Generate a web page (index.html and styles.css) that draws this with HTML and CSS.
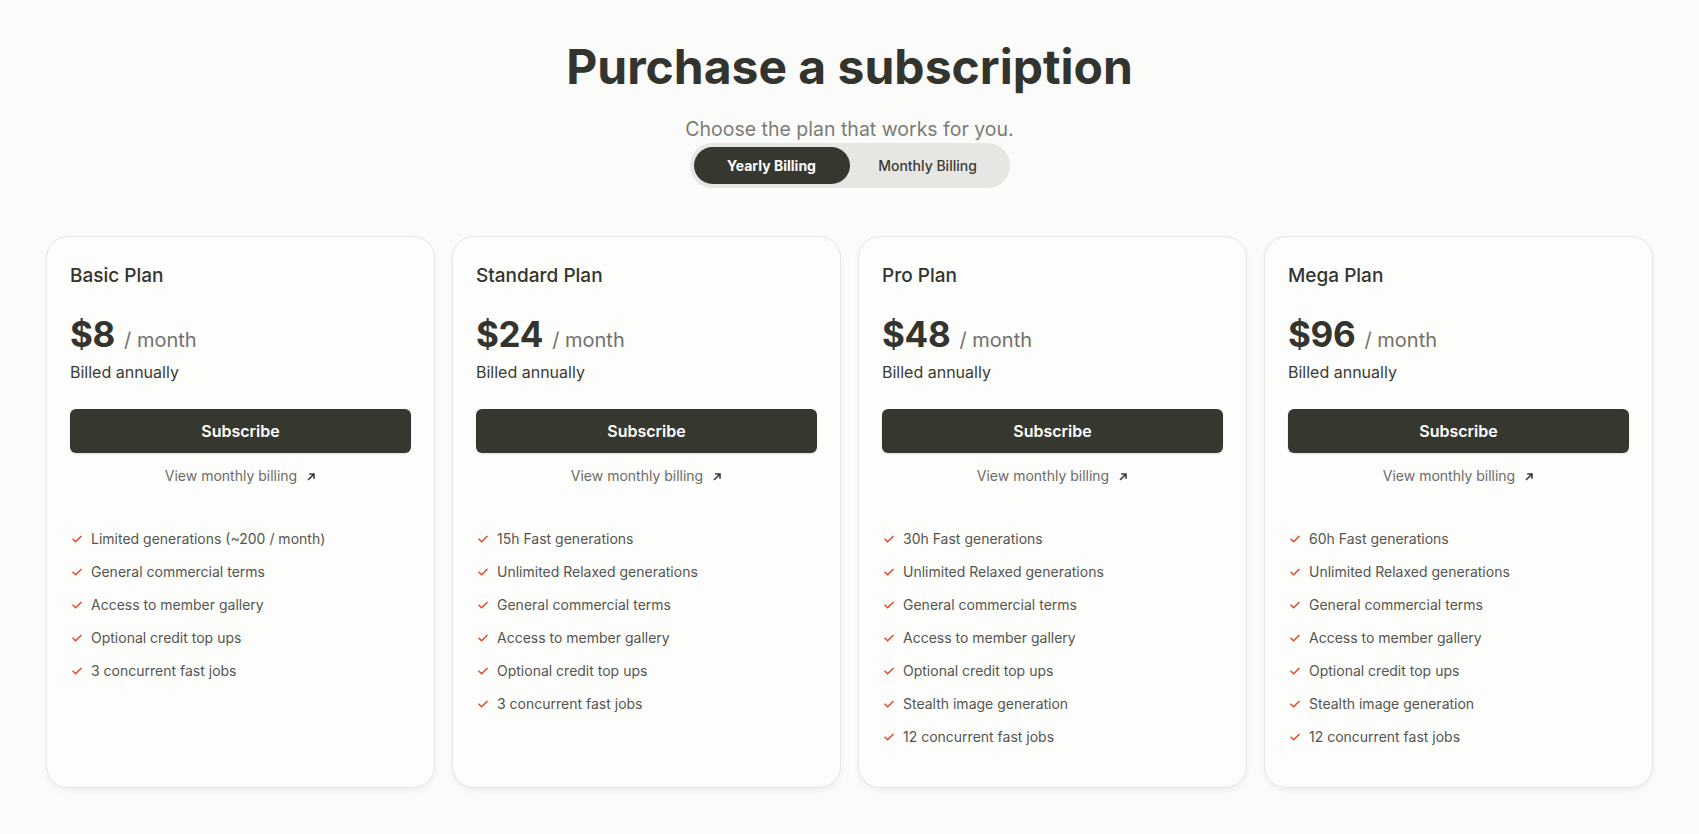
FILE: index.html
```html
<!DOCTYPE html>
<html lang="en">
<head>
<meta charset="utf-8">
<title>Purchase a subscription</title>
<link rel="stylesheet" href="styles.css">
</head>
<body>
<main class="page">
  <header class="head">
    <h1 class="title">Purchase a subscription</h1>
    <p class="subtitle">Choose the plan that works for you.</p>
    <div class="toggle">
      <button class="toggle-opt active">Yearly Billing</button>
      <button class="toggle-opt">Monthly Billing</button>
    </div>
  </header>

  <section class="plans">
    <article class="card">
      <h2 class="plan-name">Basic Plan</h2>
      <div class="price"><span class="amount">$8</span><span class="per">/ month</span></div>
      <p class="billed">Billed annually</p>
      <button class="subscribe">Subscribe</button>
      <a class="view-link" href="#">View monthly billing <svg class="arrow" width="10" height="10" viewBox="0 0 10 10"><path d="M2 8 L8 2 M3.2 2 H8 V6.8" fill="none" stroke="currentColor" stroke-width="1.6"/></svg></a>
      <ul class="features">
        <li><svg class="check" width="12" height="12" viewBox="0 0 12 12"><path d="M1.5 5.8 L4.6 8.8 L10.5 3" fill="none" stroke="currentColor" stroke-width="1.4"/></svg>Limited generations (~200 / month)</li>
        <li><svg class="check" width="12" height="12" viewBox="0 0 12 12"><path d="M1.5 5.8 L4.6 8.8 L10.5 3" fill="none" stroke="currentColor" stroke-width="1.4"/></svg>General commercial terms</li>
        <li><svg class="check" width="12" height="12" viewBox="0 0 12 12"><path d="M1.5 5.8 L4.6 8.8 L10.5 3" fill="none" stroke="currentColor" stroke-width="1.4"/></svg>Access to member gallery</li>
        <li><svg class="check" width="12" height="12" viewBox="0 0 12 12"><path d="M1.5 5.8 L4.6 8.8 L10.5 3" fill="none" stroke="currentColor" stroke-width="1.4"/></svg>Optional credit top ups</li>
        <li><svg class="check" width="12" height="12" viewBox="0 0 12 12"><path d="M1.5 5.8 L4.6 8.8 L10.5 3" fill="none" stroke="currentColor" stroke-width="1.4"/></svg>3 concurrent fast jobs</li>
      </ul>
    </article>

    <article class="card">
      <h2 class="plan-name">Standard Plan</h2>
      <div class="price"><span class="amount">$24</span><span class="per">/ month</span></div>
      <p class="billed">Billed annually</p>
      <button class="subscribe">Subscribe</button>
      <a class="view-link" href="#">View monthly billing <svg class="arrow" width="10" height="10" viewBox="0 0 10 10"><path d="M2 8 L8 2 M3.2 2 H8 V6.8" fill="none" stroke="currentColor" stroke-width="1.6"/></svg></a>
      <ul class="features">
        <li><svg class="check" width="12" height="12" viewBox="0 0 12 12"><path d="M1.5 5.8 L4.6 8.8 L10.5 3" fill="none" stroke="currentColor" stroke-width="1.4"/></svg>15h Fast generations</li>
        <li><svg class="check" width="12" height="12" viewBox="0 0 12 12"><path d="M1.5 5.8 L4.6 8.8 L10.5 3" fill="none" stroke="currentColor" stroke-width="1.4"/></svg>Unlimited Relaxed generations</li>
        <li><svg class="check" width="12" height="12" viewBox="0 0 12 12"><path d="M1.5 5.8 L4.6 8.8 L10.5 3" fill="none" stroke="currentColor" stroke-width="1.4"/></svg>General commercial terms</li>
        <li><svg class="check" width="12" height="12" viewBox="0 0 12 12"><path d="M1.5 5.8 L4.6 8.8 L10.5 3" fill="none" stroke="currentColor" stroke-width="1.4"/></svg>Access to member gallery</li>
        <li><svg class="check" width="12" height="12" viewBox="0 0 12 12"><path d="M1.5 5.8 L4.6 8.8 L10.5 3" fill="none" stroke="currentColor" stroke-width="1.4"/></svg>Optional credit top ups</li>
        <li><svg class="check" width="12" height="12" viewBox="0 0 12 12"><path d="M1.5 5.8 L4.6 8.8 L10.5 3" fill="none" stroke="currentColor" stroke-width="1.4"/></svg>3 concurrent fast jobs</li>
      </ul>
    </article>

    <article class="card">
      <h2 class="plan-name">Pro Plan</h2>
      <div class="price"><span class="amount">$48</span><span class="per">/ month</span></div>
      <p class="billed">Billed annually</p>
      <button class="subscribe">Subscribe</button>
      <a class="view-link" href="#">View monthly billing <svg class="arrow" width="10" height="10" viewBox="0 0 10 10"><path d="M2 8 L8 2 M3.2 2 H8 V6.8" fill="none" stroke="currentColor" stroke-width="1.6"/></svg></a>
      <ul class="features">
        <li><svg class="check" width="12" height="12" viewBox="0 0 12 12"><path d="M1.5 5.8 L4.6 8.8 L10.5 3" fill="none" stroke="currentColor" stroke-width="1.4"/></svg>30h Fast generations</li>
        <li><svg class="check" width="12" height="12" viewBox="0 0 12 12"><path d="M1.5 5.8 L4.6 8.8 L10.5 3" fill="none" stroke="currentColor" stroke-width="1.4"/></svg>Unlimited Relaxed generations</li>
        <li><svg class="check" width="12" height="12" viewBox="0 0 12 12"><path d="M1.5 5.8 L4.6 8.8 L10.5 3" fill="none" stroke="currentColor" stroke-width="1.4"/></svg>General commercial terms</li>
        <li><svg class="check" width="12" height="12" viewBox="0 0 12 12"><path d="M1.5 5.8 L4.6 8.8 L10.5 3" fill="none" stroke="currentColor" stroke-width="1.4"/></svg>Access to member gallery</li>
        <li><svg class="check" width="12" height="12" viewBox="0 0 12 12"><path d="M1.5 5.8 L4.6 8.8 L10.5 3" fill="none" stroke="currentColor" stroke-width="1.4"/></svg>Optional credit top ups</li>
        <li><svg class="check" width="12" height="12" viewBox="0 0 12 12"><path d="M1.5 5.8 L4.6 8.8 L10.5 3" fill="none" stroke="currentColor" stroke-width="1.4"/></svg>Stealth image generation</li>
        <li><svg class="check" width="12" height="12" viewBox="0 0 12 12"><path d="M1.5 5.8 L4.6 8.8 L10.5 3" fill="none" stroke="currentColor" stroke-width="1.4"/></svg>12 concurrent fast jobs</li>
      </ul>
    </article>

    <article class="card">
      <h2 class="plan-name">Mega Plan</h2>
      <div class="price"><span class="amount">$96</span><span class="per">/ month</span></div>
      <p class="billed">Billed annually</p>
      <button class="subscribe">Subscribe</button>
      <a class="view-link" href="#">View monthly billing <svg class="arrow" width="10" height="10" viewBox="0 0 10 10"><path d="M2 8 L8 2 M3.2 2 H8 V6.8" fill="none" stroke="currentColor" stroke-width="1.6"/></svg></a>
      <ul class="features">
        <li><svg class="check" width="12" height="12" viewBox="0 0 12 12"><path d="M1.5 5.8 L4.6 8.8 L10.5 3" fill="none" stroke="currentColor" stroke-width="1.4"/></svg>60h Fast generations</li>
        <li><svg class="check" width="12" height="12" viewBox="0 0 12 12"><path d="M1.5 5.8 L4.6 8.8 L10.5 3" fill="none" stroke="currentColor" stroke-width="1.4"/></svg>Unlimited Relaxed generations</li>
        <li><svg class="check" width="12" height="12" viewBox="0 0 12 12"><path d="M1.5 5.8 L4.6 8.8 L10.5 3" fill="none" stroke="currentColor" stroke-width="1.4"/></svg>General commercial terms</li>
        <li><svg class="check" width="12" height="12" viewBox="0 0 12 12"><path d="M1.5 5.8 L4.6 8.8 L10.5 3" fill="none" stroke="currentColor" stroke-width="1.4"/></svg>Access to member gallery</li>
        <li><svg class="check" width="12" height="12" viewBox="0 0 12 12"><path d="M1.5 5.8 L4.6 8.8 L10.5 3" fill="none" stroke="currentColor" stroke-width="1.4"/></svg>Optional credit top ups</li>
        <li><svg class="check" width="12" height="12" viewBox="0 0 12 12"><path d="M1.5 5.8 L4.6 8.8 L10.5 3" fill="none" stroke="currentColor" stroke-width="1.4"/></svg>Stealth image generation</li>
        <li><svg class="check" width="12" height="12" viewBox="0 0 12 12"><path d="M1.5 5.8 L4.6 8.8 L10.5 3" fill="none" stroke="currentColor" stroke-width="1.4"/></svg>12 concurrent fast jobs</li>
      </ul>
    </article>
  </section>
</main>
</body>
</html>
```

FILE: styles.css
```css
* { box-sizing: border-box; }

html, body {
  margin: 0;
  padding: 0;
  background: #fbfbf9;
  font-family: Inter, "Noto Sans", "Liberation Sans", sans-serif;
  color: #33342e;
}

.page {
  padding: 38px 46px 48px;
}

.head {
  display: flex;
  flex-direction: column;
  align-items: center;
}

.title {
  margin: 0;
  font-size: 48px;
  line-height: 58px;
  font-weight: 700;
  letter-spacing: 0;
  color: #33342e;
}

.subtitle {
  margin: 19px 0 0;
  font-size: 19.5px;
  line-height: 28px;
  color: #7b7b76;
  font-weight: 400;
}

.toggle {
  display: flex;
  width: 320px;
  height: 45px;
  padding: 4px;
  border-radius: 23px;
  background: #e6e7e2;
}

.toggle-opt {
  flex: 1;
  border: 0;
  border-radius: 19px;
  background: transparent;
  font-family: inherit;
  font-size: 14px;
  font-weight: 500;
  color: #3a3b35;
  cursor: pointer;
}

.toggle-opt.active {
  background: #363830;
  color: #ffffff;
  font-weight: 700;
}

.plans {
  margin-top: 48px;
  display: grid;
  grid-template-columns: repeat(4, 1fr);
  gap: 17px;
}

.card {
  display: flex;
  flex-direction: column;
  background: #fdfdfc;
  border: 1px solid #e6e6e3;
  border-radius: 22px;
  padding: 25px 23px 34px;
  box-shadow: 0 3px 6px rgba(0, 0, 0, 0.05);
}

.plan-name {
  margin: 0;
  font-size: 19px;
  line-height: 28px;
  font-weight: 500;
  color: #33342e;
}

.price {
  margin-top: 25px;
  display: flex;
  align-items: baseline;
  gap: 9px;
  line-height: 38px;
}

.amount {
  font-size: 35px;
  font-weight: 700;
  color: #33342e;
  letter-spacing: -0.3px;
}

.per {
  font-size: 20px;
  color: #71716c;
}

.billed {
  margin: 1px 0 0;
  font-size: 16px;
  line-height: 24px;
  color: #3a3b35;
}

.subscribe {
  margin-top: 25px;
  height: 44px;
  border: 0;
  border-radius: 6px;
  background: #363830;
  color: #ffffff;
  font-family: inherit;
  font-size: 16px;
  font-weight: 600;
  box-shadow: 0 1px 2px rgba(0, 0, 0, 0.12);
  cursor: pointer;
}

.view-link {
  margin-top: 13px;
  align-self: center;
  display: flex;
  align-items: center;
  gap: 9px;
  font-size: 14px;
  line-height: 20px;
  color: #6c6c67;
  text-decoration: none;
}

.arrow {
  color: #3a3b35;
  margin-top: 1px;
}

.features {
  list-style: none;
  margin: 36px 0 0;
  padding: 0;
}

.features li {
  display: flex;
  align-items: center;
  gap: 8px;
  font-size: 14px;
  line-height: 33px;
  color: #55554f;
}

.check {
  color: #e5432a;
  flex: none;
  margin-left: 1px;
  margin-top: 1px;
}
```
